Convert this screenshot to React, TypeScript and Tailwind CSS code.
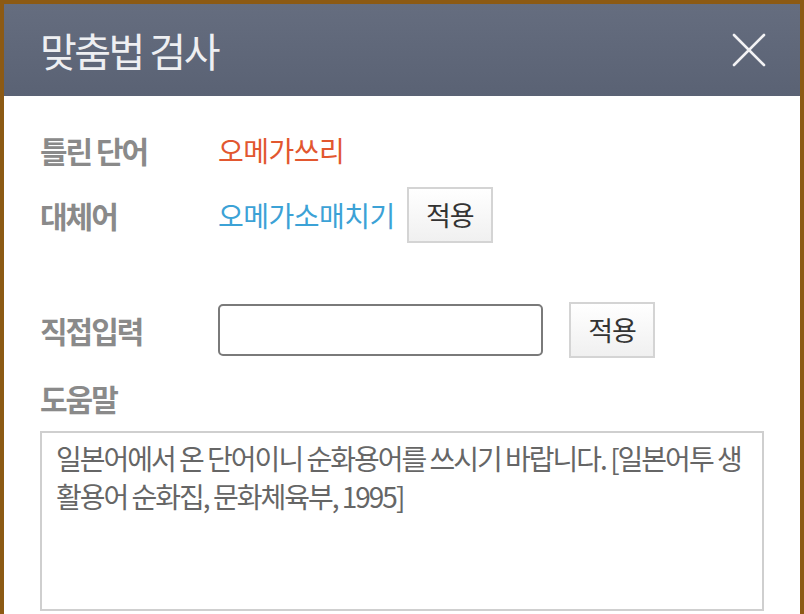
const font = { fontFamily: '"Noto Sans CJK KR", "Noto Sans", sans-serif' }

function ApplyButton() {
  return (
    <button className="flex h-[56px] w-[86px] items-center justify-center border-2 border-[#d4d4d4] bg-gradient-to-b from-[#ffffff] to-[#f0f0f0] text-[27px] tracking-[-1px] text-[#333]">
      적용
    </button>
  )
}

export default function App() {
  return (
    <div
      className="flex h-[614px] w-[804px] flex-col border-x-4 border-t-4 border-[#8c5a14] bg-white"
      style={font}
    >
      <header className="flex h-[92px] items-center justify-between bg-gradient-to-b from-[#656d7f] to-[#5a6274] pl-[36px] pr-[30px]">
        <h1 className="text-[40px] tracking-[-2.5px] text-[#eeeff2]">맞춤법 검사</h1>
        <svg width="36" height="36" viewBox="0 0 36 36" className="mr-[3px]">
          <path d="M3 3 L33 33 M33 3 L3 33" stroke="#f2f2f4" strokeWidth="2.6" strokeLinecap="round" />
        </svg>
      </header>

      <div className="flex flex-col pl-[36px] pr-[36px]">
        <div className="mt-[34px] flex h-[40px] items-center">
          <span className="w-[178px] text-[30px] font-bold tracking-[-2px] text-[#8a8a8a]">틀린 단어</span>
          <span className="text-[28px] tracking-[-0.5px] text-[#e2572f]">오메가쓰리</span>
        </div>

        <div className="mt-[17px] flex items-center">
          <span className="w-[178px] text-[30px] font-bold tracking-[-2px] text-[#8a8a8a]">대체어</span>
          <span className="mr-[12px] text-[28px] tracking-[-0.5px] text-[#3ca2d6]">오메가소매치기</span>
          <ApplyButton />
        </div>

        <div className="mt-[59px] flex items-center">
          <span className="w-[178px] text-[30px] font-bold tracking-[-2px] text-[#8a8a8a]">직접입력</span>
          <input className="h-[52px] w-[325px] rounded-[5px] border-2 border-[#7a7a7a] bg-white px-3 outline-none" />
          <div className="ml-[26px]">
            <ApplyButton />
          </div>
        </div>

        <div className="mt-[25px] flex h-[30px] items-center text-[30px] font-bold tracking-[-2px] text-[#8a8a8a]">
          도움말
        </div>

        <div className="mt-[18px] h-[180px] border-2 border-[#cfcfcf] px-[14px] py-[6px] text-[28px] leading-[38px] tracking-[-2px] text-[#666]">
          일본어에서 온 단어이니 순화용어를 쓰시기 바랍니다. [일본어투 생활용어 순화집, 문화체육부, 1995]
        </div>
      </div>
    </div>
  )
}
